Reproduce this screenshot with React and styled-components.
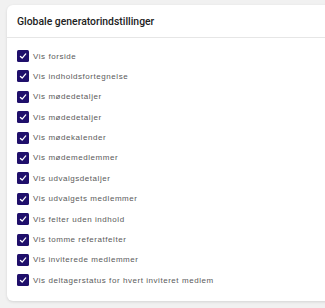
import React from "react";
import styled, { createGlobalStyle } from "styled-components";

const GlobalStyle = createGlobalStyle`
  html, body {
    margin: 0;
    padding: 0;
    background: #f1f1f1;
    font-family: Roboto, "Liberation Sans", sans-serif;
  }
`;

const Page = styled.div`
  padding: 5px 0 0 7px;
  width: 325px;
  height: 308px;
  box-sizing: border-box;
  overflow: hidden;
`;

const Card = styled.section`
  width: 340px;
  background: #fff;
  border-radius: 6px;
  box-shadow: 0 1px 3px rgba(0, 0, 0, 0.12);
  box-sizing: border-box;
`;

const CardHeader = styled.header`
  height: 32px;
  display: flex;
  align-items: center;
  padding: 0 10px;
  border-bottom: 1px solid #e6e6e6;
  font-size: 10.4px;
  font-weight: 500;
  color: #222;
`;

const List = styled.ul`
  list-style: none;
  margin: 0;
  padding: 12px 10px 15px;
  display: flex;
  flex-direction: column;
  gap: 8.4px;
`;

const Row = styled.li`
  display: flex;
  align-items: center;
  height: 12px;
  gap: 4px;
`;

const Box = styled.span`
  width: 12px;
  height: 12px;
  border-radius: 1.5px;
  background: ${({ checked }) => (checked ? "#1f0f6b" : "#fff")};
  display: flex;
  align-items: center;
  justify-content: center;
  flex: none;
`;

const Label = styled.span`
  font-family: "Liberation Sans", Arial, sans-serif;
  font-size: 8px;
  letter-spacing: 0.55px;
  color: #5a5a5a;
`;

const items = [
  "Vis forside",
  "Vis indholdsfortegnelse",
  "Vis mødedetaljer",
  "Vis mødedetaljer",
  "Vis mødekalender",
  "Vis mødemedlemmer",
  "Vis udvalgsdetaljer",
  "Vis udvalgets medlemmer",
  "Vis felter uden indhold",
  "Vis tomme referatfelter",
  "Vis inviterede medlemmer",
  "Vis deltagerstatus for hvert inviteret medlem",
];

const Check = () => (
  <svg width="8" height="8" viewBox="0 0 10 10">
    <path d="M1.8 5.6 L4 7.6 L8.4 2.4" fill="none" stroke="#fff" strokeWidth="1.6" strokeLinecap="round" strokeLinejoin="round" />
  </svg>
);

export default function App() {
  return (
    <>
      <GlobalStyle />
      <Page>
        <Card>
          <CardHeader>Globale generatorindstillinger</CardHeader>
          <List>
            {items.map((text, i) => (
              <Row key={i}>
                <Box checked>
                  <Check />
                </Box>
                <Label>{text}</Label>
              </Row>
            ))}
          </List>
        </Card>
      </Page>
    </>
  );
}
